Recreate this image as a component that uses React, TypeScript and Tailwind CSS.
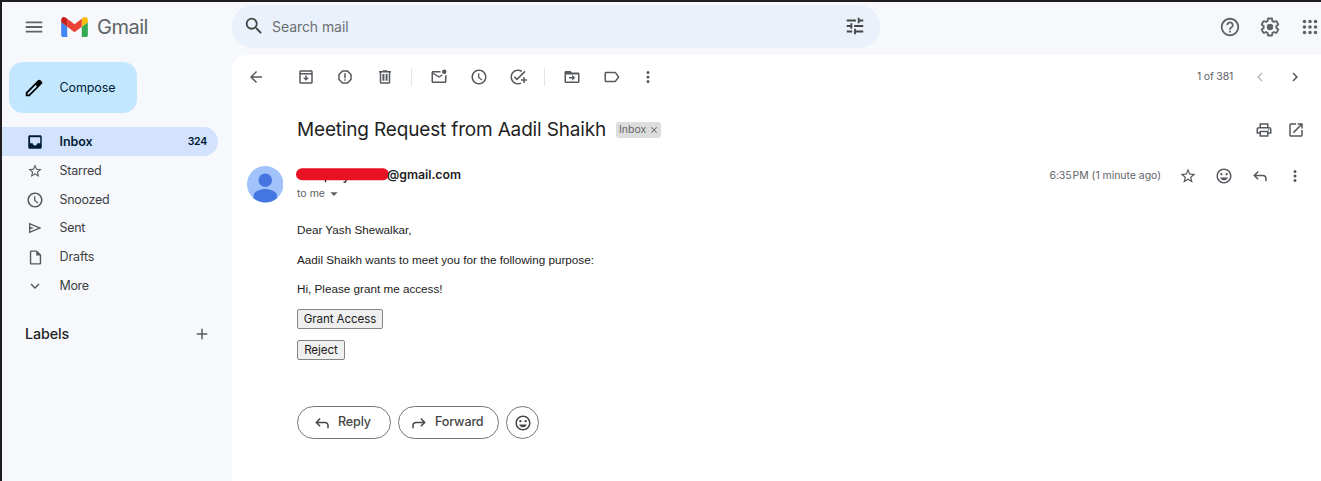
import React from "react";

const icons = {
  menu: "M3 18h18v-2H3v2zm0-5h18v-2H3v2zm0-7v2h18V6H3z",
  search:
    "M15.5 14h-.79l-.28-.27A6.47 6.47 0 0 0 16 9.5 6.5 6.5 0 1 0 9.5 16c1.61 0 3.09-.59 4.23-1.57l.27.28v.79l5 4.99L20.49 19l-4.99-5zm-6 0C7.01 14 5 11.99 5 9.5S7.01 5 9.5 5 14 7.01 14 9.5 11.99 14 9.5 14z",
  tune: "M3 17v2h6v-2H3zM3 5v2h10V5H3zm10 16v-2h8v-2h-8v-2h-2v6h2zM7 9v2H3v2h4v2h2V9H7zm14 4v-2H11v2h10zm-6-4h2V7h4V5h-4V3h-2v6z",
  help: "M11 18h2v-2h-2v2zm1-16C6.48 2 2 6.48 2 12s4.48 10 10 10 10-4.48 10-10S17.52 2 12 2zm0 18c-4.41 0-8-3.59-8-8s3.59-8 8-8 8 3.59 8 8-3.59 8-8 8zm0-14c-2.21 0-4 1.79-4 4h2c0-1.1.9-2 2-2s2 .9 2 2c0 2-3 1.75-3 5h2c0-2.25 3-2.5 3-5 0-2.21-1.79-4-4-4z",
  settings:
    "M13.85 22.25h-3.7c-.74 0-1.36-.54-1.45-1.27l-.27-1.89c-.27-.14-.53-.29-.79-.46l-1.8.72c-.7.26-1.47-.03-1.81-.65L2.2 15.53c-.35-.66-.2-1.44.36-1.88l1.53-1.19c-.01-.15-.02-.3-.02-.46 0-.15.01-.31.02-.46l-1.52-1.19c-.59-.45-.74-1.26-.37-1.88l1.85-3.19c.34-.62 1.11-.9 1.79-.63l1.81.73c.26-.17.52-.32.78-.46l.27-1.91c.09-.7.71-1.25 1.44-1.25h3.7c.74 0 1.36.54 1.45 1.27l.27 1.89c.27.14.53.29.79.46l1.8-.72c.71-.26 1.48.03 1.82.65l1.84 3.18c.36.66.2 1.44-.36 1.88l-1.52 1.19c.01.15.02.3.02.46s-.01.31-.02.46l1.52 1.19c.56.45.72 1.23.37 1.86l-1.86 3.22c-.34.62-1.11.9-1.8.63l-1.8-.72c-.26.17-.52.32-.78.46l-.27 1.91c-.1.68-.72 1.22-1.46 1.22zm-3.23-2h2.76l.37-2.55.53-.22c.44-.18.88-.44 1.34-.78l.45-.34 2.38.96 1.38-2.4-2.03-1.58.07-.56c.03-.26.06-.51.06-.78s-.03-.53-.06-.78l-.07-.56 2.03-1.58-1.39-2.4-2.39.96-.45-.35c-.42-.32-.87-.58-1.33-.77l-.52-.22-.37-2.55h-2.76l-.37 2.55-.53.21c-.44.19-.88.44-1.34.79l-.45.33-2.38-.95-1.39 2.39 2.03 1.58-.07.56a7 7 0 0 0-.06.79c0 .26.02.53.06.78l.07.56-2.03 1.58 1.38 2.4 2.39-.96.45.35c.43.33.86.58 1.33.77l.53.22.38 2.55zM12 15.5a3.5 3.5 0 1 0 0-7 3.5 3.5 0 0 0 0 7z",
  apps: "M6 8a2 2 0 1 0 0-4 2 2 0 0 0 0 4zm6 12a2 2 0 1 0 0-4 2 2 0 0 0 0 4zm-6 0a2 2 0 1 0 0-4 2 2 0 0 0 0 4zm0-6a2 2 0 1 0 0-4 2 2 0 0 0 0 4zm6 0a2 2 0 1 0 0-4 2 2 0 0 0 0 4zm6-6a2 2 0 1 0 0-4 2 2 0 0 0 0 4zm-6 0a2 2 0 1 0 0-4 2 2 0 0 0 0 4zm6 6a2 2 0 1 0 0-4 2 2 0 0 0 0 4zm0 6a2 2 0 1 0 0-4 2 2 0 0 0 0 4z",
  back: "M20 11H7.83l5.59-5.59L12 4l-8 8 8 8 1.41-1.41L7.83 13H20v-2z",
  archive:
    "M19 3H5c-1.1 0-2 .9-2 2v14c0 1.1.9 2 2 2h14c1.1 0 2-.9 2-2V5c0-1.1-.9-2-2-2zm0 2v1.7H5V5h14zM5 19V8.6h14V19H5zm8-9h-2v3H8l4 4 4-4h-3v-3z",
  report:
    "M15.73 3H8.27L3 8.27v7.46L8.27 21h7.46L21 15.73V8.27L15.73 3zM19 14.9L14.9 19H9.1L5 14.9V9.1L9.1 5h5.8L19 9.1v5.8zM11 7h2v6.5h-2zM11 15h2v2h-2z",
  trash:
    "M15 4V3H9v1H4v2h1v13c0 1.1.9 2 2 2h10c1.1 0 2-.9 2-2V6h1V4h-5zm2 15H7V6h10v13zM8.6 8h2.6v9H8.6zM12.8 8h2.6v9h-2.6z",
  unread:
    "M22 8.98V18c0 1.1-.9 2-2 2H4c-1.1 0-2-.9-2-2V6c0-1.1.9-2 2-2h10.1a5 5 0 0 0 0 2H4l8 5 3.67-2.29c.47.43 1.02.76 1.63.98L12 13 4 8v10h16V9.9c.74-.15 1.42-.48 2-.92zM19 8a3 3 0 1 0 0-6 3 3 0 0 0 0 6z",
  clock:
    "M11.99 2C6.47 2 2 6.48 2 12s4.47 10 9.99 10C17.52 22 22 17.52 22 12S17.52 2 11.99 2zM12 20c-4.42 0-8-3.58-8-8s3.58-8 8-8 8 3.58 8 8-3.58 8-8 8zm.5-13H10.8v6l4.7 3.8 1-1.5-4-3.1z",
  addTask:
    "M22 5.18L10.59 16.6l-4.24-4.24 1.41-1.41 2.83 2.83 10-10L22 5.18zM12 20c-4.41 0-8-3.59-8-8s3.59-8 8-8c1.57 0 3.04.46 4.28 1.25l1.45-1.45A10.02 10.02 0 0 0 12 2C6.48 2 2 6.48 2 12s4.48 10 10 10c1.73 0 3.36-.44 4.78-1.22l-1.5-1.5c-1 .46-2.11.72-3.28.72zm7-5h-3v2h3v3h2v-3h3v-2h-3v-3h-2v3z",
  move: "M20 6h-8l-2-2H4c-1.1 0-2 .9-2 2v12c0 1.1.9 2 2 2h16c1.1 0 2-.9 2-2V8c0-1.1-.9-2-2-2zm0 12H4V8.5h16V18zm-7.8-1l4-4-4-4v3H8v2h4.2v3z",
  label:
    "M17.63 5.84C17.27 5.33 16.67 5 16 5H4c-1.1 0-2 .9-2 2v10c0 1.1.9 2 2 2h12c.67 0 1.27-.33 1.63-.84L22 12l-4.37-6.16zM16 17H4V7h12l3.55 5L16 17z",
  more: "M12 8a2 2 0 1 0 0-4 2 2 0 0 0 0 4zm0 2a2 2 0 1 0 0 4 2 2 0 0 0 0-4zm0 6a2 2 0 1 0 0 4 2 2 0 0 0 0-4z",
  left: "M15.41 7.41L14 6l-6 6 6 6 1.41-1.41L10.83 12z",
  right: "M10 6L8.59 7.41 13.17 12l-4.58 4.59L10 18l6-6z",
  print:
    "M19 8h-1V3H6v5H5c-1.66 0-3 1.34-3 3v6h4v4h12v-4h4v-6c0-1.66-1.34-3-3-3zM8 5h8v3H8V5zm8 14H8v-4h8v4zm2-4v-2H6v2H4v-4c0-.55.45-1 1-1h14c.55 0 1 .45 1 1v4h-2zm0-4.5a1 1 0 1 0 0 2 1 1 0 0 0 0-2z",
  open: "M19 19H5V5h7V3H5a2 2 0 0 0-2 2v14a2 2 0 0 0 2 2h14c1.1 0 2-.9 2-2v-7h-2v7zM14 3v2h3.59l-9.83 9.83 1.41 1.41L19 6.41V10h2V3h-7z",
  star: "M22 9.24l-7.19-.62L12 2 9.19 8.63 2 9.24l5.46 4.73L5.82 21 12 17.27 18.18 21l-1.63-7.03L22 9.24zM12 15.4l-3.76 2.27 1-4.28-3.32-2.88 4.38-.38L12 6.1l1.71 4.04 4.38.38-3.32 2.88 1 4.28L12 15.4z",
  smile:
    "M11.99 2C6.47 2 2 6.48 2 12s4.47 10 9.99 10C17.52 22 22 17.52 22 12S17.52 2 11.99 2zM12 20c-4.42 0-8-3.58-8-8s3.58-8 8-8 8 3.58 8 8-3.58 8-8 8zm3.5-9c.83 0 1.5-.67 1.5-1.5S16.33 8 15.5 8 14 8.67 14 9.5s.67 1.5 1.5 1.5zm-7 0c.83 0 1.5-.67 1.5-1.5S9.33 8 8.5 8 7 8.67 7 9.5 7.67 11 8.5 11zm3.5 6.8c2.33 0 4.31-1.56 5.11-3.8H6.89c.8 2.24 2.78 3.8 5.11 3.8z",
  reply:
    "M8.8 5.4L3 11.2 8.8 17l1.4-1.4-3.4-3.4H16c1.7 0 3 1.3 3 3V19h2v-3.8c0-2.8-2.2-5-5-5H6.8l3.4-3.4z",
  forward:
    "M15.2 5.4L21 11.2 15.2 17l-1.4-1.4 3.4-3.4H8c-1.7 0-3 1.3-3 3V19H3v-3.8c0-2.8 2.2-5 5-5h9.2l-3.4-3.4z",
  inbox:
    "M19 3H5c-1.1 0-2 .9-2 2v14c0 1.1.9 2 2 2h14c1.1 0 2-.9 2-2V5c0-1.1-.9-2-2-2zm0 10.5h-4c0 1.66-1.35 3-3 3s-3-1.34-3-3H5.5V5.5H19v8z",
  send: "M3 4v16l19-8L3 4zm2 3l11.85 5L5 17v-3.5l6-1.5-6-1.5V7z",
  draft:
    "M14 2H6c-1.1 0-2 .9-2 2v16c0 1.1.9 2 2 2h12c1.1 0 2-.9 2-2V8l-6-6zM6 20V4h7v5h5v11H6z",
  down: "M7.41 8.59L12 13.17l4.59-4.58L18 10l-6 6-6-6z",
  add: "M19 13h-6v6h-2v-6H5v-2h6V5h2v6h6v2z",
  caret: "M6.5 9.5l5.5 5.5 5.5-5.5z",
  close:
    "M19 6.41L17.59 5 12 10.59 6.41 5 5 6.41 10.59 12 5 17.59 6.41 19 12 13.41 17.59 19 19 17.59 13.41 12z",
  pencil:
    "M20.41 4.94l-1.35-1.35c-.78-.78-2.05-.78-2.83 0L3 16.82V21h4.18L20.41 7.77c.79-.78.79-2.05 0-2.83zM6.41 19.06L5 19v-1.36l8.82-8.82 1.41 1.41-8.82 8.83z",
};

type IconName = keyof typeof icons;

function Icon({ name, className = "size-[18px]" }: { name: IconName; className?: string }) {
  return (
    <svg viewBox="0 0 24 24" fill="currentColor" fillRule="evenodd" className={`block shrink-0 ${className}`}>
      <path d={icons[name]} />
    </svg>
  );
}

function Tool({ name, className = "w-[39.6px]" }: { name: IconName; className?: string }) {
  return (
    <button className={`flex h-9 shrink-0 items-center justify-center ${className}`}>
      <Icon name={name} />
    </button>
  );
}

function Logo() {
  return (
    <svg viewBox="52 42 88 66" className="block h-5 w-[27px]">
      <path fill="#4285f4" d="M58 108h14V74L52 59v43c0 3.32 2.69 6 6 6" />
      <path fill="#34a853" d="M120 108h14c3.32 0 6-2.69 6-6V59l-20 15" />
      <path fill="#fbbc04" d="M120 48v26l20-15v-8c0-7.42-8.47-11.65-14.4-7.2" />
      <path fill="#ea4335" d="M72 74V48l24 18 24-18v26L96 92" />
      <path fill="#c5221f" d="M52 51v8l20 15V48l-5.6-4.2c-5.94-4.45-14.4-.22-14.4 7.2" />
    </svg>
  );
}

const folders: { icon: IconName; label: string; iconClass: string; text: string }[] = [
  { icon: "star", label: "Starred", iconClass: "size-4", text: "tracking-[-0.22px]" },
  { icon: "clock", label: "Snoozed", iconClass: "size-[18px]", text: "tracking-[-0.3px]" },
  { icon: "send", label: "Sent", iconClass: "size-4", text: "tracking-[-0.33px]" },
  { icon: "draft", label: "Drafts", iconClass: "size-[17px]", text: "tracking-[-0.12px]" },
  { icon: "down", label: "More", iconClass: "size-[18px]", text: "tracking-[-0.35px]" },
];

function Header() {
  return (
    <header className="flex h-[53px] shrink-0 items-center pb-1">
      <div className="flex w-[230px] shrink-0 items-center pl-[21px] text-[#5f6368]">
        <Icon name="menu" className="size-[22px]" />
        <div className="ml-4">
          <Logo />
        </div>
        <span className="ml-[9px] text-[20px] tracking-[-0.5px]">Gmail</span>
      </div>
      <div className="flex h-[43px] w-[648px] items-center rounded-full bg-[#eaf1fb] pr-[14px] pb-px pl-[11px]">
        <Icon name="search" className="size-[22px] text-[#444746]" />
        <span className="ml-[7px] flex-1 text-[14px] tracking-[-0.07px] text-[#6b6f74]">Search mail</span>
        <Icon name="tune" className="size-[22px] text-[#444746]" />
      </div>
      <div className="ml-auto flex items-center gap-[18px] text-[#5f6368]">
        <Icon name="help" className="size-[22px]" />
        <Icon name="settings" className="size-[22px]" />
        <Icon name="apps" className="size-[22px]" />
      </div>
    </header>
  );
}

function Sidebar() {
  return (
    <aside className="w-[230px] shrink-0 text-[#3c4043]">
      <button className="mt-[7px] ml-[7px] flex h-[51px] w-32 items-center rounded-[14px] bg-[#c2e7ff] pl-[14px] text-black">
        <Icon name="pencil" className="size-[22px]" />
        <span className="ml-[14.5px] pt-0.5 text-[12.5px] tracking-[-0.1px] text-[#001d35]">Compose</span>
      </button>
      <nav className="mt-[14px] text-[12.5px]">
        <div className="flex h-[29px] w-[216px] items-center rounded-r-full bg-[#d3e3fd] pr-[11px] pl-6 font-semibold text-[#001d35]">
          <Icon name="inbox" />
          <span className="ml-[15.5px] flex-1 pt-px tracking-[-0.05px]">Inbox</span>
          <span className="pt-px text-[10.5px] tracking-[-0.25px]">324</span>
        </div>
        {folders.map((f) => (
          <div key={f.label} className="flex h-[28.8px] items-center pl-6">
            <span className="flex w-[18px] justify-center pt-px text-[#55585c]">
              <Icon name={f.icon} className={f.iconClass} />
            </span>
            <span className={`ml-[15.5px] pt-[1.5px] ${f.text}`}>{f.label}</span>
          </div>
        ))}
      </nav>
      <div className="mt-[22px] flex h-6 items-center justify-between pr-[21px] pl-[23px]">
        <span className="text-[14.3px] font-medium tracking-[-0.1px] text-[#1f1f1f]">Labels</span>
        <Icon name="add" className="size-[18px] text-[#55585c]" />
      </div>
    </aside>
  );
}

function Toolbar() {
  return (
    <div className="flex h-11 items-center text-[#55585c]">
      <Tool name="back" className="ml-1 w-10" />
      <div className="ml-2.5 flex">
        <Tool name="archive" />
        <Tool name="report" />
        <Tool name="trash" />
      </div>
      <div className="ml-[6px] h-[18px] w-px bg-[#e3e5e8]" />
      <div className="ml-[7.5px] flex">
        <Tool name="unread" />
        <Tool name="clock" />
        <Tool name="addTask" />
      </div>
      <div className="ml-[6px] h-[18px] w-px bg-[#e3e5e8]" />
      <div className="ml-[7.5px] flex">
        <Tool name="move" />
        <Tool name="label" />
        <Tool name="more" className="w-[33px]" />
      </div>
      <span className="mr-[18px] ml-auto text-[10.5px] tracking-[-0.2px] text-[#5f6368]">1 of 381</span>
      <Icon name="left" className="size-[18px] text-[#b8babc]" />
      <Icon name="right" className="mr-[17px] ml-[17px] size-[18px]" />
    </div>
  );
}

function Message() {
  return (
    <article>
      <div className="mt-[15px] flex h-8 items-center pr-4 pl-[65px] text-[#55585c]">
        <h1 className="text-[19px] tracking-[-0.166px] text-[#1f1f1f]">Meeting Request from Aadil Shaikh</h1>
        <span className="ml-[10px] flex h-4 w-[45px] items-center rounded-[3px] bg-[#dddddd] pl-[3px] text-[10.5px] tracking-[0px] text-[#666666]">
          Inbox
          <Icon name="close" className="ml-[3px] size-[10px]" />
        </span>
        <Icon name="print" className="ml-auto size-[18px]" />
        <Icon name="open" className="ml-[14.5px] size-[18px]" />
      </div>

      <div className="mt-[17px] flex h-[45px] pl-[14.5px]">
        <svg viewBox="0 0 36 36" className="mt-[3px] block size-[36.5px] shrink-0">
          <circle cx="18" cy="18" r="18" fill="#a1c2fa" />
          <circle cx="18" cy="14" r="6.6" fill="#4475e0" />
          <path d="M6.5 31.8V29c0-4.2 7.4-6.3 11.5-6.3s11.5 2.1 11.5 6.3v2.8A18 18 0 0 1 18 36a18 18 0 0 1-11.5-4.2z" fill="#4475e0" />
        </svg>
        <div className="ml-[14px] pt-[1.5px]">
          <div className="flex h-[21px] items-center text-[#1f1f1f]">
            <svg viewBox="0 0 92 14" className="block h-[14px] w-[92px] overflow-visible">
              <path d="M28.5 11.5v2.8M49.5 11l-1 3.1h-2" stroke="#1f1f1f" strokeWidth="1.3" fill="none" />
              <rect x="-1" y="0.3" width="93" height="12" rx="6" fill="#e81224" />
            </svg>
            <span className="-ml-[2px] pt-px text-[12.3px] font-semibold tracking-[-0.02px]">@gmail.com</span>
          </div>
          <div className="flex h-4 items-center text-[10.5px] tracking-[0.02px] text-[#5f6368]">
            to me
            <Icon name="caret" className="ml-[1px] size-4" />
          </div>
        </div>
        <div className="ml-auto flex h-[25px] items-center text-[#55585c]">
          <span className="mr-[18px] text-[10.5px] tracking-[-0.04px] text-[#5f6368]">6:35&#8202;PM (1 minute ago)</span>
          <Icon name="star" />
          <Icon name="smile" className="ml-[18px] size-[18px]" />
          <Icon name="reply" className="ml-[18px] size-[18px]" />
          <Icon name="more" className="mr-[17px] ml-[17px] size-[18px]" />
        </div>
      </div>

      <div className="pl-[65px]">
        <div className="mt-[13px] font-['Liberation_Sans',sans-serif] text-[11.7px] text-[#222222]">
          <p className="h-[29.5px] leading-[18px]">Dear Yash Shewalkar,</p>
          <p className="h-[29.5px] leading-[18px]">Aadil Shaikh wants to meet you for the following purpose:</p>
          <p className="h-[29px] leading-[18px]">Hi, Please grant me access!</p>
        </div>
        <button className="flex h-5 w-[86px] items-center justify-center rounded-[2px] border border-[#858585] bg-[#efefef] pt-px text-[11.6px] tracking-[-0.1px] text-[#222222]">
          Grant Access
        </button>
        <button className="mt-[11px] flex h-5 w-12 items-center justify-center rounded-[2px] border border-[#858585] bg-[#efefef] pt-px text-[11.6px] tracking-[-0.05px] text-[#222222]">
          Reject
        </button>
        <div className="mt-[46px] flex gap-[7px] text-[12.6px] font-medium text-[#444746]">
          <button className="flex h-[33px] w-[94px] items-center rounded-full border border-[#747775] pl-[15px]">
            <Icon name="reply" />
            <span className="ml-[7px] tracking-[-0.15px]">Reply</span>
          </button>
          <button className="flex h-[33px] w-[101px] items-center rounded-full border border-[#747775] pl-[11px]">
            <Icon name="forward" />
            <span className="ml-[7px] tracking-[-0.15px]">Forward</span>
          </button>
          <button className="flex size-[33px] items-center justify-center rounded-full border border-[#747775]">
            <Icon name="smile" />
          </button>
        </div>
      </div>
    </article>
  );
}

export default function App() {
  return (
    <div className="flex h-[481px] w-[1321px] flex-col overflow-hidden border-t-2 border-l-2 border-[#211d1f] bg-[#f6f8fc] font-['Inter',sans-serif] whitespace-nowrap">
      <Header />
      <div className="flex min-h-0 flex-1">
        <Sidebar />
        <main className="min-w-0 flex-1 rounded-tl-[14px] bg-white">
          <Toolbar />
          <Message />
        </main>
      </div>
    </div>
  );
}
